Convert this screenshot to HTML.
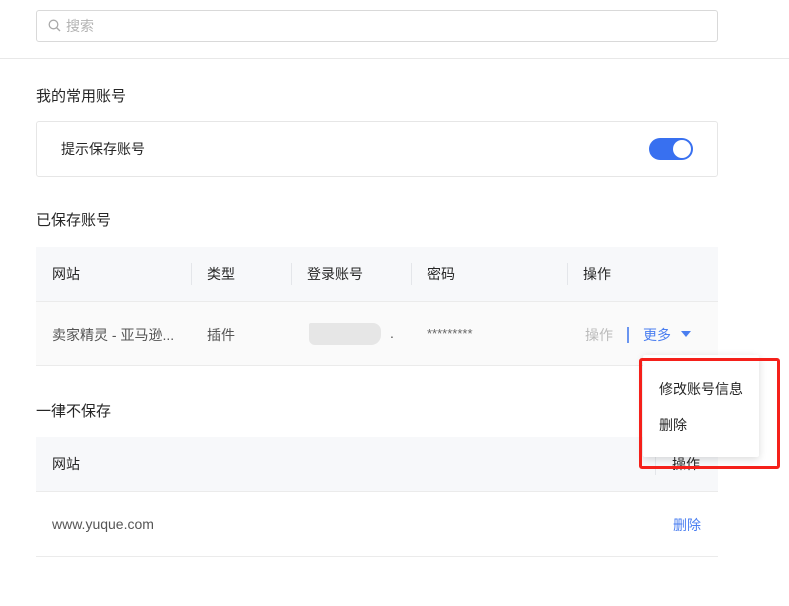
<!DOCTYPE html>
<html><head><meta charset="utf-8"><style>
*{margin:0;padding:0;box-sizing:border-box}
body{width:789px;height:606px;background:#fff;font-family:"Liberation Sans","Noto Sans CJK SC",sans-serif;font-size:14px;color:#262626;position:relative;overflow:hidden}
.a{position:absolute}
.hd{background:#f7f8fa}
.vd{position:absolute;width:1px;height:22px;background:#e4e6ea;top:16px}
</style></head><body>
<div class="a" style="left:36px;top:10px;width:682px;height:32px;border:1px solid #d9d9d9;border-radius:3px"></div>
<svg class="a" style="left:48px;top:19px" width="13" height="13" viewBox="0 0 13 13"><circle cx="5.5" cy="5.5" r="4.3" fill="none" stroke="#aaa" stroke-width="1.3"/><line x1="8.7" y1="8.7" x2="12" y2="12" stroke="#aaa" stroke-width="1.4"/></svg>
<div class="a" style="left:66px;top:16px;color:#b3b3b3">搜索</div>
<div class="a" style="left:0;top:58px;width:789px;height:1px;background:#e8e8e8"></div>
<div class="a" style="left:36px;top:85px;font-size:15px">我的常用账号</div>
<div class="a" style="left:36px;top:121px;width:682px;height:56px;border:1px solid #e6e6e6;border-radius:3px"></div>
<div class="a" style="left:61px;top:139px">提示保存账号</div>
<div class="a" style="left:649px;top:138px;width:44px;height:22px;border-radius:11px;background:#3870f0"></div>
<div class="a" style="left:673px;top:140px;width:18px;height:18px;border-radius:50%;background:#fff"></div>
<div class="a" style="left:36px;top:209px;font-size:15px">已保存账号</div>
<div class="a hd" style="left:36px;top:247px;width:682px;height:54px"></div>
<div class="a" style="left:36px;top:301px;width:682px;height:1px;background:#ebebeb"></div>
<div class="a" style="left:36px;top:302px;width:682px;height:64px;background:#fafafa;border-bottom:1px solid #ebebeb"></div>
<div class="vd" style="left:191px;top:263px"></div><div class="vd" style="left:291px;top:263px"></div><div class="vd" style="left:411px;top:263px"></div><div class="vd" style="left:567px;top:263px"></div>
<div class="a" style="left:52px;top:264px">网站</div>
<div class="a" style="left:207px;top:264px">类型</div>
<div class="a" style="left:307px;top:264px">登录账号</div>
<div class="a" style="left:427px;top:264px">密码</div>
<div class="a" style="left:583px;top:264px">操作</div>
<div class="a" style="left:52px;top:325px;color:#555">卖家精灵 - 亚马逊...</div>
<div class="a" style="left:207px;top:325px;color:#555">插件</div>
<div class="a" style="left:309px;top:323px;width:72px;height:22px;background:#e6e6e6;border-radius:2px 8px 10px 6px"></div>
<div class="a" style="left:390px;top:325px;color:#555">.</div>
<div class="a" style="left:427px;top:326px;color:#666;font-size:13px">*********</div>
<div class="a" style="left:585px;top:325px;color:#bbb">操作</div>
<div class="a" style="left:627px;top:327px;width:2px;height:16px;background:#6a95f0"></div>
<div class="a" style="left:643px;top:325px;color:#4a7ef0">更多</div>
<div class="a" style="left:681px;top:331px;width:0;height:0;border-left:5px solid transparent;border-right:5px solid transparent;border-top:6px solid #4a7ef0"></div>
<div class="a" style="left:36px;top:400px;font-size:15px">一律不保存</div>
<div class="a hd" style="left:36px;top:437px;width:682px;height:54px"></div>
<div class="a" style="left:36px;top:491px;width:682px;height:66px;border-top:1px solid #ebebeb;border-bottom:1px solid #ebebeb"></div>
<div class="vd" style="left:655px;top:453px"></div>
<div class="a" style="left:52px;top:454px">网站</div>
<div class="a" style="left:672px;top:454px">操作</div>
<div class="a" style="left:52px;top:516px;color:#555;font-size:14px">www.yuque.com</div>
<div class="a" style="left:673px;top:515px;color:#4a7ef0">删除</div>
<div class="a" style="left:643px;top:355px;width:116px;height:102px;background:#fff;box-shadow:0 2px 8px rgba(0,0,0,.15);border-radius:2px"></div>
<div class="a" style="left:659px;top:379px">修改账号信息</div>
<div class="a" style="left:659px;top:415px">删除</div>
<div class="a" style="left:639px;top:358px;width:141px;height:111px;border:3px solid #f5201a;border-radius:3px"></div>
</body></html>
